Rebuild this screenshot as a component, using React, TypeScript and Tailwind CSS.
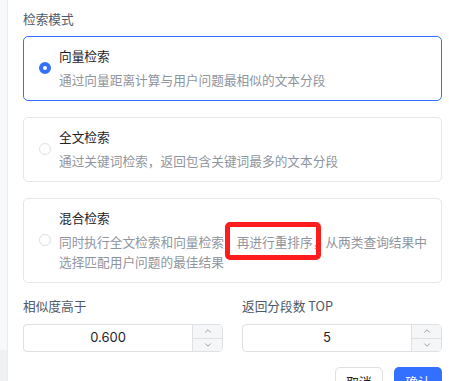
import { ChevronUp, ChevronDown } from "lucide-react";

interface Mode {
  id: string;
  title: string;
  desc: React.ReactNode;
}

const modes: Mode[] = [
  {
    id: "vector",
    title: "向量检索",
    desc: "通过向量距离计算与用户问题最相似的文本分段",
  },
  {
    id: "fulltext",
    title: "全文检索",
    desc: "通过关键词检索，返回包含关键词最多的文本分段",
  },
  {
    id: "hybrid",
    title: "混合检索",
    desc: (
      <>
        同时执行全文检索和向量检索，
        <span className="relative">
          再进行重排序，
          <span className="absolute left-[-12px] right-[4px] top-[-10px] bottom-[-9px] rounded-[5px] border-[5px] border-[#ff1c1c]" />
        </span>
        从两类查询结果中选择匹配用户问题的最佳结果
      </>
    ),
  },
];

function Radio({ checked }: { checked: boolean }) {
  if (checked) {
    return <span className="h-[12px] w-[12px] shrink-0 rounded-full border-[4px] border-[#3370ff] bg-white" />;
  }
  return <span className="h-[12px] w-[12px] shrink-0 rounded-full border border-[#dee0e3] bg-white" />;
}

function NumberInput({ value }: { value: string }) {
  return (
    <div className="flex h-[28px] rounded-[4px] border border-[#dee0e3] bg-white">
      <div className="flex flex-1 items-center justify-center font-['Inter',sans-serif] text-[13px] text-[#1f2329]">
        {value}
      </div>
      <div className="flex w-[30px] flex-col border-l border-[#dee0e3] bg-[#f5f6f7]">
        <div className="flex flex-1 items-center justify-center border-b border-[#dee0e3] text-[#646a73]">
          <ChevronUp size={10} strokeWidth={1.5} />
        </div>
        <div className="flex flex-1 items-center justify-center text-[#646a73]">
          <ChevronDown size={10} strokeWidth={1.5} />
        </div>
      </div>
    </div>
  );
}

export default function App() {
  const selected = "vector";

  return (
    <div className="flex h-[381px] w-[449px] overflow-hidden bg-white font-['Noto_Sans_CJK_SC','Noto_Sans',sans-serif] text-[12.7px]">
      <div className="flex w-[8px] flex-col border-r border-[#ebecef]">
        <div className="h-[350px] bg-[#f8f9fa]" />
        <div className="flex-1 bg-[#f0f1f3]" />
      </div>

      <div className="flex-1 pl-[15px] pr-[7px] pt-[9px]">
        <div className="mb-[7px] leading-[20px] text-[#4e5969]">检索模式</div>

        <div className="flex flex-col gap-[16px]">
          {modes.map((mode) => {
            const active = mode.id === selected;
            return (
              <div
                key={mode.id}
                className={`flex items-center gap-[8px] rounded-[5px] border pl-[15px] pr-[8px] pt-[9px] pb-[10px] ${
                  active ? "border-[#3370ff]" : "border-[#e5e6eb]"
                }`}
              >
                <Radio checked={active} />
                <div className="flex-1">
                  <div className="leading-[20px] text-[#1f2329]">{mode.title}</div>
                  <div className="mt-[4px] leading-[20px] text-[#8f959e]">{mode.desc}</div>
                </div>
              </div>
            );
          })}
        </div>

        <div className="mt-[13px] grid grid-cols-2 gap-[19px]">
          <div>
            <div className="mb-[8px] leading-[20px] text-[#4e5969]">相似度高于</div>
            <NumberInput value="0.600" />
          </div>
          <div>
            <div className="mb-[8px] leading-[20px] text-[#4e5969]">返回分段数 TOP</div>
            <NumberInput value="5" />
          </div>
        </div>

        <div className="mt-[15px] flex justify-end gap-[11px]">
          <button className="h-[30px] w-[48px] rounded-[5px] border border-[#dee0e3] bg-white text-[#1f2329]">
            取消
          </button>
          <button className="h-[30px] w-[48px] rounded-[5px] bg-[#3370ff] text-white">确认</button>
        </div>
      </div>
    </div>
  );
}
